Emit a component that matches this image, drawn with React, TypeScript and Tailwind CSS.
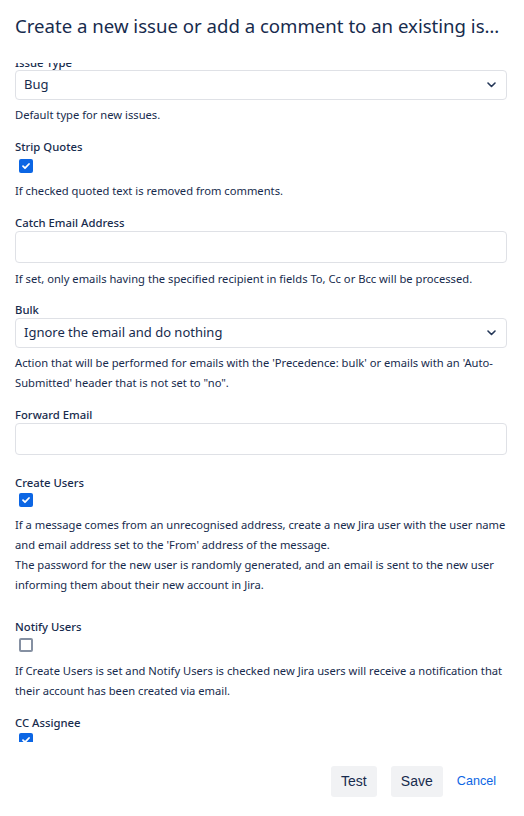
import type { ReactNode } from 'react';

// ─── Small form pieces ───────────────────────────────────────────────────────

function Label({ children }: { children: ReactNode }) {
  return <div className="text-[11.3px] leading-4 font-medium text-[#172b4d]">{children}</div>;
}

function Help({ children, className = '' }: { children: ReactNode; className?: string }) {
  return <div className={`text-[11.2px] leading-5 text-[#172b4d] ${className}`}>{children}</div>;
}

function Select({ value }: { value: string }) {
  return (
    <div className="h-[30px] flex items-center justify-between rounded-[4px] border border-[#dfe1e6] pl-2 pr-[10px] text-[13px] text-[#172b4d]">
      <span>{value}</span>
      <svg className="w-[9px] h-[6px]" viewBox="0 0 9 6" fill="none">
        <path d="M1 1l3.5 3.5L8 1" stroke="#253858" strokeWidth={1.6} strokeLinecap="round" strokeLinejoin="round" />
      </svg>
    </div>
  );
}

function TextInput() {
  return <div className="h-[32px] rounded-[4px] border border-[#dfe1e6]" />;
}

function Checkbox({ checked, className = '' }: { checked: boolean; className?: string }) {
  return (
    <div className={`ml-[4px] ${className}`}>
      {checked ? (
        <div className="w-[14px] h-[14px] rounded-[2px] bg-[#0c66e4] flex items-center justify-center">
          <svg className="w-[10px] h-[10px]" viewBox="0 0 10 10" fill="none">
            <path d="M2 5.2l2 2L8 3" stroke="white" strokeWidth={1.8} strokeLinecap="round" strokeLinejoin="round" />
          </svg>
        </div>
      ) : (
        <div className="w-[14px] h-[14px] rounded-[2px] border-2 border-[#8590a2]" />
      )}
    </div>
  );
}

// ─── Dialog ──────────────────────────────────────────────────────────────────

export default function App() {
  return (
    <div className="w-[524px] h-[816px] flex flex-col bg-white text-[#172b4d] font-['Noto_Sans',sans-serif]">
      {/* Header */}
      <header className="h-[63px] shrink-0 flex items-start pt-[14px] pl-[15px] pr-[20px]">
        <h2 className="text-[18.6px] leading-6 truncate">
          Create a new issue or add a comment to an existing issue
        </h2>
      </header>

      {/* Scrolled body */}
      <div className="flex-1 overflow-hidden">
        <div className="-mt-[8px] pl-[15px] pr-[17px]">
          <Label>Issue Type</Label>
          <div className="-mt-[1px]">
            <Select value="Bug" />
          </div>
          <Help className="mt-[5px]">Default type for new issues.</Help>

          <div className="mt-[14px]">
            <Label>Strip Quotes</Label>
            <Checkbox checked className="mt-[4px]" />
            <Help className="mt-[8px]">If checked quoted text is removed from comments.</Help>
          </div>

          <div className="mt-[14px]">
            <Label>Catch Email Address</Label>
            <TextInput />
            <Help className="mt-[6px]">
              If set, only emails having the specified recipient in fields To, Cc or Bcc will be processed.
            </Help>
          </div>

          <div className="mt-[13px]">
            <Label>Bulk</Label>
            <Select value="Ignore the email and do nothing" />
            <Help className="mt-[5px]">
              Action that will be performed for emails with the 'Precedence: bulk' or emails with an 'Auto-Submitted'
              header that is not set to "no".
            </Help>
          </div>

          <div className="mt-[14px]">
            <Label>Forward Email</Label>
            <TextInput />
          </div>

          <div className="mt-[20px]">
            <Label>Create Users</Label>
            <Checkbox checked className="mt-[2px]" />
            <Help className="mt-[8px]">
              If a message comes from an unrecognised address, create a new Jira user with the user name and email
              address set to the 'From' address of the message.
              <br />
              The password for the new user is randomly generated, and an email is sent to the new user informing
              them about their new account in Jira.
            </Help>
          </div>

          <div className="mt-[24px]">
            <Label>Notify Users</Label>
            <Checkbox checked={false} className="mt-[3px]" />
            <Help className="mt-[9px]">
              If Create Users is set and Notify Users is checked new Jira users will receive a notification that
              their account has been created via email.
            </Help>
          </div>

          <div className="mt-[14px]">
            <Label>CC Assignee</Label>
            <Checkbox checked className="mt-[2px]" />
          </div>
        </div>
      </div>

      {/* Footer */}
      <footer className="h-[74px] shrink-0 flex items-start justify-end pt-[24px] pr-[28px] font-['Liberation_Sans',sans-serif] text-[14px]">
        <button className="h-[31px] w-[46px] rounded-[3px] bg-[#f1f2f4] text-[#172b4d]">Test</button>
        <button className="ml-[14px] h-[31px] w-[52px] rounded-[3px] bg-[#f1f2f4] text-[#172b4d]">Save</button>
        <button className="ml-[14px] h-[31px] text-[12.6px] text-[#0c66e4]">Cancel</button>
      </footer>
    </div>
  );
}
